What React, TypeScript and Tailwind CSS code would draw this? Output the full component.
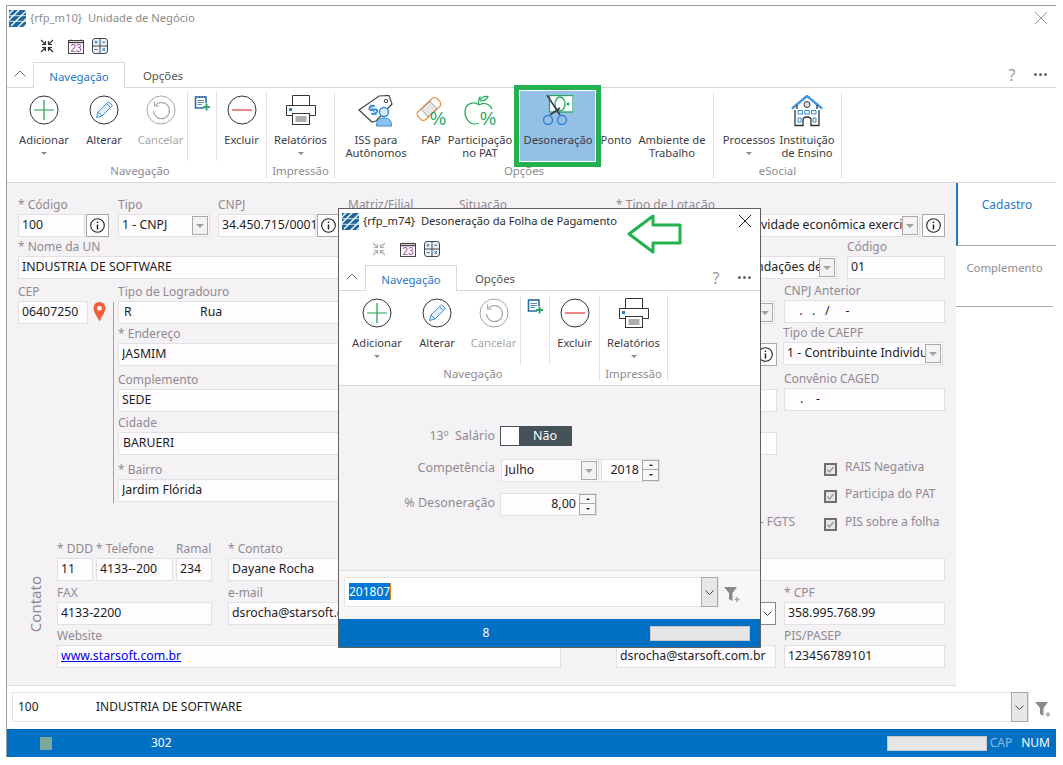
import type { ReactNode } from 'react'

const font = 'font-["Noto_Sans",sans-serif]'

function Logo() {
  return (
    <svg width="17" height="17" viewBox="0 0 17 17" className="shrink-0">
      <rect width="17" height="17" fill="#1b679e" />
      <path d="M-2 6 6 -2M-2 12 12 -2M2 16 18 0M8 18 18 8M14 18 20 12" stroke="#fff" strokeWidth="1.4" />
      <path d="M0 5.7H17M0 11.3H17" stroke="#fff" strokeWidth="0.8" />
    </svg>
  )
}

function CollapseIcon({ color }: { color: string }) {
  return (
    <svg width="14" height="14" viewBox="0 0 14 14" fill="none" stroke={color} strokeWidth="1.2">
      <path d="M1 1 5.5 5.5M2 5.5H5.5V2M13 1 8.5 5.5M12 5.5H8.5V2M1 13 5.5 8.5M2 8.5H5.5V12M13 13 8.5 8.5M12 8.5H8.5V12" />
    </svg>
  )
}

function CalendarIcon() {
  return (
    <svg width="16" height="15" viewBox="0 0 16 15" fill="none">
      <rect x="0.5" y="1.5" width="15" height="13" fill="#fff" stroke="#444" />
      <path d="M.5 3.500H15.500" stroke="#444" strokeWidth="1.5" />
      <path d="M3 .5V2M13 .5V2" stroke="#444" />
      <text x="8" y="13" textAnchor="middle" fontSize="10" fontFamily="Liberation Sans, sans-serif" fill="#a24aa8">
        23
      </text>
    </svg>
  )
}

function CalcIcon() {
  return (
    <svg width="16" height="16" viewBox="0 0 16 16" fill="none">
      <rect x="0.5" y="0.5" width="15" height="15" rx="2.5" fill="#eef2f5" stroke="#445" />
      <path d="M8 .5V15.500M.5 8H15.500" stroke="#445" />
      <path d="M2.500 4.200H5.500M4 2.700V5.700M10 4.200H13.500M2.500 11.500H5.500M10.500 10 13 13M13 10 10.500 13" stroke="#2b7cc4" />
    </svg>
  )
}

function AddIcon() {
  return (
    <svg width="30" height="30" viewBox="0 0 30 30" fill="none">
      <circle cx="15" cy="15" r="14" stroke="#333" />
      <path d="M15 5V25M5 15H25" stroke="#1aa14c" strokeWidth="1.2" />
    </svg>
  )
}

function EditIcon() {
  return (
    <svg width="30" height="30" viewBox="0 0 30 30" fill="none">
      <circle cx="15" cy="15" r="14" stroke="#333" />
      <path d="M7.500 22.500 9 17 19.500 6.700 23.500 10.500 13 21Z M9 17 13 21M17.500 8.700 21.500 12.500" stroke="#3b8ed6" fill="#e4f0fa" />
    </svg>
  )
}

function UndoIcon() {
  return (
    <svg width="30" height="30" viewBox="0 0 30 30" fill="none" stroke="#a6a6a6">
      <circle cx="15" cy="15" r="14" />
      <path d="M9.300 10.500A8 8 0 1 1 7.500 16" strokeWidth="1.1" />
      <path d="M8.500 6.500V11H13" strokeWidth="1.1" />
    </svg>
  )
}

function NoteAddIcon() {
  return (
    <svg width="17" height="17" viewBox="0 0 17 17" fill="none">
      <path d="M10 13H1.500V2H12V8" stroke="#2d6ea8" strokeWidth="1.600" />
      <path d="M3 1V3M5.500 1V3M8 1V3M10.500 1V3" stroke="#2d6ea8" />
      <path d="M3.500 5.500H10M3.500 7.500H10M3.500 9.500H8" stroke="#2d6ea8" strokeWidth=".8" />
      <path d="M12.500 8.500V15.500M9 12H16" stroke="#2fa866" strokeWidth="2" />
    </svg>
  )
}

function MinusIcon() {
  return (
    <svg width="30" height="30" viewBox="0 0 30 30" fill="none">
      <circle cx="15" cy="15" r="14" stroke="#333" />
      <path d="M5 15H25" stroke="#e0353b" strokeWidth="1.2" />
    </svg>
  )
}

function PrinterIcon() {
  return (
    <svg width="30" height="30" viewBox="0 0 30 30" fill="none" stroke="#333">
      <path d="M6.500 10V.5H23.500V10" />
      <path d="M6 20.500H.5V10.500H29.500V20.500H24" fill="#fff" />
      <rect x="6.500" y="18.500" width="17" height="11" fill="#fff" />
      <path d="M9.500 22H20.500M9.500 24H20.500M9.500 26H20.500" strokeWidth=".8" />
      <rect x="3" y="13" width="3" height="3" fill="#2b7cc4" stroke="none" />
    </svg>
  )
}

function TagIcon() {
  return (
    <svg width="36" height="32" viewBox="0 0 36 32" fill="none">
      <path d="M1 15 21 1 31 .5 34 9 18 26 14 27Z" fill="#fff" stroke="#444" strokeWidth="1.2" />
      <circle cx="28" cy="6" r="1.700" stroke="#444" />
      <text x="15" y="20" textAnchor="middle" fontSize="15" fontWeight="700" fontFamily="Liberation Sans, sans-serif" fill="#2f8bd8" transform="rotate(-30 15 15)">
        $
      </text>
      <circle cx="26" cy="17" r="4.500" fill="#dbeafa" stroke="#2f8bd8" strokeWidth="1.400" />
      <path d="M18.500 31C18.500 25 21 23 26 23S33.500 25 33.500 31Z" fill="#8cc0ee" stroke="#2f8bd8" />
    </svg>
  )
}

function BandageIcon() {
  return (
    <svg width="33" height="32" viewBox="0 0 33 32" fill="none">
      <rect x="-13" y="-5.500" width="26" height="11" rx="3.500" transform="translate(14 14) rotate(-43)" fill="#fff" stroke="#ef8d3e" strokeWidth="1.300" />
      <rect x="-6" y="-5" width="12" height="10" transform="translate(14 14) rotate(-43)" fill="#e6e6e6" stroke="#888" strokeWidth=".8" />
      <text x="23" y="30" textAnchor="middle" fontSize="18" fontFamily="Liberation Sans, sans-serif" fill="#22a860">
        %
      </text>
    </svg>
  )
}

function AppleIcon() {
  return (
    <svg width="33" height="32" viewBox="0 0 33 32" fill="none" stroke="#28ab5c" strokeWidth="1.200">
      <path d="M15 10C10 6 1 8 1 17C1 24 6 29 10 29C12 29 13 28.500 15 28.500" />
      <path d="M15 10C17 8.500 21 8 24 9.500C26 11 27.500 12.500 28 14" />
      <path d="M14.500 9C14.500 6 15 3 16.500 1.500M16 5C18 2 21 1 24 1.500C23 4 20 6 16 6" />
      <text x="24" y="30" textAnchor="middle" fontSize="18" fontFamily="Liberation Sans, sans-serif" fill="#22a860" stroke="none">
        %
      </text>
    </svg>
  )
}

function ScissorsIcon() {
  return (
    <svg width="30" height="30" viewBox="0 0 30 30" fill="none">
      <rect x="6.500" y=".5" width="23.500" height="16.500" fill="#fff" stroke="#22a860" strokeWidth="1.300" />
      <ellipse cx="17" cy="9" rx="5" ry="7" stroke="#22a860" strokeWidth="1.300" />
      <circle cx="25" cy="9" r="1.500" fill="#22a860" />
      <path d="M4 0 17 20M17 13 7 20" stroke="#3a3a4a" strokeWidth="1.600" />
      <circle cx="5" cy="25" r="4.500" stroke="#2f7fd0" strokeWidth="1.400" />
      <circle cx="19" cy="25" r="4.500" stroke="#2f7fd0" strokeWidth="1.400" />
    </svg>
  )
}

function HouseIcon() {
  return (
    <svg width="32" height="32" viewBox="0 0 32 32" fill="none">
      <path d="M1 13.500 16 1 31 13.500" stroke="#3f97e2" strokeWidth="2.400" />
      <path d="M4 15V30.500H12V25C12 23 13.500 22 16 22S20 23 20 25V30.500H28V15M6 10V14M26 10V14" stroke="#333" strokeWidth="1.300" />
      <circle cx="16" cy="9.500" r="3" stroke="#333" fill="#ddd" />
      <path d="M7 15.500H11.500V19H7ZM13.800 15.500H18.200V19H13.800ZM20.500 15.500H25V19H20.500ZM7 23H10V27H7ZM22 23H25V27H22Z" stroke="#2f8bd8" />
    </svg>
  )
}

function Caret() {
  return <span className="mt-[6px] block h-0 w-0 border-x-[3.5px] border-t-[3.5px] border-x-transparent border-t-[#8a8a8a]" />
}

function RibbonButton({
  w,
  icon,
  label,
  caret,
  disabled,
  divider,
}: {
  w: number
  icon: ReactNode
  label: ReactNode
  caret?: boolean
  disabled?: boolean
  divider?: boolean
}) {
  return (
    <div
      style={{ width: w }}
      className={`flex h-[69px] shrink-0 flex-col items-center pt-[3px] ${divider ? 'border-r border-[#e2e0e2]' : ''}`}
    >
      <div className="flex h-[38px] items-start justify-center">{icon}</div>
      <div className={`whitespace-nowrap text-center text-[11.2px] leading-[13px] ${disabled ? 'text-[#a8a8a8]' : 'text-[#3c3c46]'}`}>{label}</div>
      {caret && <Caret />}
    </div>
  )
}

function RibbonGroup({ label, children }: { label: string; children: ReactNode }) {
  return (
    <div className="mt-[4px] flex h-[86px] shrink-0 flex-col border-r border-[#e2e0e2]">
      <div className="flex">{children}</div>
      <div className="mt-auto h-[14px] text-center text-[11.4px] leading-[13px] text-[#8f8a92]">{label}</div>
    </div>
  )
}

function NavGroups() {
  return (
    <>
      <RibbonGroup label="Navegação">
        <RibbonButton w={60} icon={<AddIcon />} label="Adicionar" caret />
        <RibbonButton w={60} icon={<EditIcon />} label="Alterar" />
        <RibbonButton w={54} icon={<UndoIcon />} label="Cancelar" disabled divider />
        <RibbonButton w={29} icon={<NoteAddIcon />} label="" divider />
        <RibbonButton w={49} icon={<MinusIcon />} label="Excluir" />
      </RibbonGroup>
      <RibbonGroup label="Impressão">
        <RibbonButton w={67} icon={<PrinterIcon />} label="Relatórios" caret />
      </RibbonGroup>
    </>
  )
}

function WindowHeader({
  title,
  active,
  children,
  left,
}: {
  title: ReactNode
  active?: boolean
  children: ReactNode
  left: string
}) {
  return (
    <>
      <div className={`flex h-[26px] items-center pb-[2px] ${left}`}>
        <Logo />
        <span className={`ml-[4px] flex-1 whitespace-nowrap text-[11.2px] ${active ? 'text-[#2c2c2c]' : 'text-[#8c8c8c]'}`}>{title}</span>
        <svg width="14" height="14" viewBox="0 0 14 14" className="mr-[8px]" stroke={active ? '#222' : '#999'} fill="none">
          <path d="M1 1 13 13M13 1 1 13" />
        </svg>
      </div>
      <div className="flex h-[30px] items-center pb-[2px] pl-[33px]">
        <CollapseIcon color={active ? '#aab0b4' : '#333'} />
        <span className="ml-[14px]">
          <CalendarIcon />
        </span>
        <span className="ml-[8px]">
          <CalcIcon />
        </span>
      </div>
      <div className="flex h-[26px] border-b border-[#d8d8d8] text-[11.4px]">
        <div className="flex w-[26px] items-center justify-center pb-[2px]">
          <svg width="12" height="7" viewBox="0 0 12 7" fill="none" stroke="#777">
            <path d="M.5 6.500 6 1 11.500 6.500" />
          </svg>
        </div>
        <div className="z-10 flex h-[26px] w-[92px] items-center justify-center border-x border-t border-[#d8d8d8] bg-white pt-[2px] text-[#1a7ad0]">Navegação</div>
        <div className="flex w-[76px] items-center justify-center pt-[2px] text-[#555]">Opções</div>
        <div className="flex-1" />
        <div className="flex w-[40px] items-center justify-center text-[16px] text-[#9a9a9a]">?</div>
        <div className="flex w-[24px] items-center justify-start gap-[2px] pl-[2px]">
          <span className="h-[3px] w-[3px] rounded-full bg-[#666]" />
          <span className="h-[3px] w-[3px] rounded-full bg-[#666]" />
          <span className="h-[3px] w-[3px] rounded-full bg-[#666]" />
        </div>
      </div>
      {children}
    </>
  )
}

function InfoButton({ className = '' }: { className?: string }) {
  return (
    <div className={`flex h-[23px] w-[23px] shrink-0 items-center justify-center border border-[#a9a9a9] bg-white ${className}`}>
      <svg width="15" height="15" viewBox="0 0 15 15" fill="none" stroke="#222">
        <circle cx="7.500" cy="7.500" r="6.800" strokeWidth="1.100" />
        <path d="M7.500 6.500V11.500" strokeWidth="1.500" />
        <path d="M7.500 3.500V5" strokeWidth="1.500" />
      </svg>
    </div>
  )
}

function DropArrow() {
  return (
    <div className="mr-[1px] flex h-[19px] w-[16px] shrink-0 items-center justify-center border border-[#a9a9a9] bg-[#f4f2f4]">
      <span className="h-0 w-0 border-x-[4px] border-t-[4px] border-x-transparent border-t-[#a0a0a0]" />
    </div>
  )
}

function Box({ text, select, className = '', w, textClass = '' }: { text?: ReactNode; select?: boolean; className?: string; w?: number; textClass?: string }) {
  return (
    <div
      style={w ? { width: w } : undefined}
      className={`flex h-[23px] min-w-0 shrink-0 items-center overflow-hidden border border-[#e2e0e3] bg-[#fffcff] pl-[3px] text-[12.3px] text-[#1c1c1c] ${className}`}
    >
      <span className={`min-w-0 flex-1 overflow-hidden whitespace-nowrap ${textClass}`}>{text}</span>
      {select && <DropArrow />}
    </div>
  )
}

function Field({
  label,
  w,
  children,
  className = '',
}: {
  label: string
  w: number
  children: ReactNode
  className?: string
}) {
  return (
    <div style={{ width: w }} className={`shrink-0 ${className}`}>
      <div className="h-[18px] whitespace-nowrap leading-[18px] text-[#8f8a92]">{label}</div>
      <div className="flex">{children}</div>
    </div>
  )
}

function CheckRow({ label, className = '' }: { label: string; className?: string }) {
  return (
    <div className={`flex h-[18px] items-start pl-[40px] ${className}`}>
      <svg width="13" height="13" viewBox="0 0 13 13" className="mt-[5px] shrink-0" fill="none">
        <rect x="1" y="1" width="11" height="11" fill="#e6e6e6" stroke="#6e6e6e" strokeWidth="2" />
        <path d="M3.500 6.500 5.500 9 9.500 4" stroke="#9a9a9a" strokeWidth="1.300" />
      </svg>
      <span className="ml-[8px] whitespace-nowrap leading-[18px] text-[#8f8a92]">{label}</span>
    </div>
  )
}

function Funnel() {
  return (
    <svg width="17" height="17" viewBox="0 0 17 17">
      <path d="M0 1H13L8.500 7V15L5 13V7Z" fill="#8a8a8a" />
      <path d="M13 11V16M10.500 13.500H15.500" stroke="#a8a8a8" strokeWidth="1.500" />
    </svg>
  )
}

function ChevronBox() {
  return (
    <div className="flex h-[30px] w-[17px] shrink-0 items-center justify-center border border-[#a9a9a9] bg-[#e9e6ea]">
      <svg width="9" height="5" viewBox="0 0 9 5" fill="none" stroke="#444">
        <path d="M.5 .5 4.500 4.500 8.500 .5" />
      </svg>
    </div>
  )
}

function Spinner() {
  return (
    <div className="flex h-[21px] w-[17px] shrink-0 flex-col">
      <div className="flex h-[10px] items-center justify-center border border-[#a9a9a9] bg-[#f8f8f8]">
        <span className="h-0 w-0 border-x-[2px] border-b-[2px] border-x-transparent border-b-[#222]" />
      </div>
      <div className="flex h-[11px] items-center justify-center border border-t-0 border-[#a9a9a9] bg-[#f8f8f8]">
        <span className="h-0 w-0 border-x-[2px] border-t-[2px] border-x-transparent border-t-[#222]" />
      </div>
    </div>
  )
}

function MainForm() {
  return (
    <div className="h-[503px] w-[949px] shrink-0 border-b border-[#dedcde] bg-[#f5f2f5] pl-[11px] pt-[13px]">
      <div className="flex">
        <Field label="* Código" w={91}>
          <Box text="100" w={67} />
          <InfoButton className="ml-[1px]" />
        </Field>
        <Field label="Tipo" w={92} className="ml-[9px]">
          <Box text="1 - CNPJ" select w={92} />
        </Field>
        <Field label="CNPJ" w={122} className="ml-[8px]">
          <Box text="34.450.715/0001" w={98} />
          <InfoButton className="ml-[1px]" />
        </Field>
        <Field label="Matriz/Filial" w={103} className="ml-[8px]">
          <Box text="Matriz" select w={103} />
        </Field>
        <Field label="Situação" w={149} className="ml-[8px]">
          <Box text="Ativa" select w={149} />
        </Field>
        <Field label="* Tipo de Lotação" w={329} className="ml-[8px]">
          <Box text="01 - Classificação da atividade econômica exercida" textClass="pl-[8px]" select w={304} />
          <InfoButton className="ml-[2px]" />
        </Field>
      </div>
      <div className="mt-[1px] flex">
        <Field label="* Nome da UN" w={590}>
          <Box text="INDUSTRIA DE SOFTWARE" w={590} />
        </Field>
        <Field label="Natureza" w={221} className="ml-[8px]">
          <Box text="Tipo de Entidades e Fundações de direito" textClass="pl-[6px]" select w={221} />
        </Field>
        <Field label="Código" w={98} className="ml-[10px]">
          <Box text="01" w={98} />
        </Field>
      </div>
      <div className="mt-[3px] flex">
        <div className="flex w-[95px] shrink-0 pt-[1px]">
          <Field label="CEP" w={70}>
            <Box text="06407250" w={70} />
          </Field>
          <svg width="13" height="20" viewBox="0 0 13 20" className="ml-[5px] mt-[19px]">
            <path d="M6.500 0C2.800 0 .5 2.800 .5 6.200 .5 10 4.500 15 6.500 19.500 8.500 15 12.500 10 12.500 6.200 12.500 2.800 10.200 0 6.500 0Z" fill="#f2603c" />
            <circle cx="6.500" cy="6.300" r="2.400" fill="#fff" />
          </svg>
        </div>
        <div className="mt-[20px] h-[201px] w-px shrink-0 bg-[#a4a2a6]" />
        <div className="ml-[4px] w-[659px] shrink-0 pt-[1px]">
          <div className="flex">
            <Field label="Tipo de Logradouro" w={490}>
              <Box
                w={490}
                text={
                  <span className="flex">
                    <span className="w-[78px] pl-[2px]">R</span>
                    <span>Rua</span>
                  </span>
                }
              />
            </Field>
            <Field label="Nacionalidade" w={159} className="ml-[8px]">
              <Box text="Brasileira" select w={159} />
            </Field>
          </div>
          <div className="mt-[1px] flex">
            <Field label="* Endereço" w={490}>
              <Box text="JASMIM" w={490} />
            </Field>
            <Field label="CAEPF" w={161} className="ml-[8px]">
              <Box w={144} />
              <InfoButton className="-ml-[6px] w-[23px]" />
            </Field>
          </div>
          <div className="mt-[5px] flex">
            <Field label="Complemento" w={490}>
              <Box text="SEDE" w={490} />
            </Field>
            <Field label="CNAE" w={161} className="ml-[8px]">
              <Box w={161} />
            </Field>
          </div>
          <div className="mt-[2px] flex">
            <Field label="Cidade" w={490}>
              <Box text="BARUERI" w={490} className="pl-[4px]" />
            </Field>
            <Field label="Município" w={161} className="ml-[8px]">
              <Box w={161} />
            </Field>
          </div>
          <div className="mt-[6px] flex">
            <Field label="* Bairro" w={490}>
              <Box text="Jardim Flórida" w={490} />
            </Field>
          </div>
          <div className="mt-[11px] h-[18px] w-[677px] whitespace-nowrap text-right leading-[18px] text-[#8f8a92]">Optante - FGTS</div>
        </div>
        <div className="ml-[7px] w-[161px] shrink-0">
          <Field label="CNPJ Anterior" w={161}>
            <Box text={<span className="pl-[8px]">&nbsp;.&nbsp;&nbsp;&nbsp;.&nbsp;&nbsp;&nbsp;/&nbsp;&nbsp;&nbsp;&nbsp;&nbsp;-</span>} w={161} />
          </Field>
          <Field label="Tipo de CAEPF" w={160} className="-ml-[1px] mt-[1px]">
            <Box text="1 - Contribuinte Individual" select w={160} />
          </Field>
          <Field label="Convênio CAGED" w={161} className="mt-[5px]">
            <Box text={<span className="pl-[12px]">.&nbsp;&nbsp;&nbsp;&nbsp;-</span>} w={161} />
          </Field>
          <CheckRow label="RAIS Negativa" className="mt-[47px]" />
          <CheckRow label="Participa do PAT" className="mt-[9px]" />
          <CheckRow label="PIS sobre a folha" className="mt-[10px]" />
        </div>
      </div>
      <div className="mt-[9px] flex">
        <div className="flex w-[39px] shrink-0 items-center justify-center pr-[5px]">
          <span className="rotate-180 text-[15px] text-[#8f8a92] [writing-mode:vertical-rl]">Contato</span>
        </div>
        <div>
          <div className="flex">
            <Field label="* DDD" w={36}>
              <Box text="11" w={36} />
            </Field>
            <Field label="* Telefone" w={77} className="ml-[3px]">
              <Box text="4133--200" w={77} />
            </Field>
            <Field label="Ramal" w={36} className="ml-[3px]">
              <Box text="234" w={36} />
            </Field>
            <Field label="* Contato" w={717} className="ml-[16px]">
              <Box text="Dayane Rocha" w={717} />
            </Field>
          </div>
          <div className="mt-[3px] flex">
            <Field label="FAX" w={155}>
              <Box text="4133-2200" w={155} />
            </Field>
            <Field label="e-mail" w={380} className="ml-[16px]">
              <Box text="dsrocha@starsoft.com.br" w={380} />
            </Field>
            <Field label="Tipo" w={160} className="ml-[8px]">
              <Box w={160} text="" />
              <div className="-ml-[17px] flex h-[23px] w-[17px] shrink-0 items-center justify-center border border-[#8a8a8a] bg-white">
                <svg width="9" height="5" viewBox="0 0 9 5" fill="none" stroke="#444">
                  <path d="M.5 .5 4.500 4.500 8.500 .5" />
                </svg>
              </div>
            </Field>
            <Field label="* CPF" w={161} className="ml-[8px]">
              <Box text="358.995.768.99" w={161} />
            </Field>
          </div>
          <div className="mt-[2px] flex">
            <Field label="Website" w={504}>
              <Box text={<span className="text-[#0000ee] underline">www.starsoft.com.br</span>} w={504} />
            </Field>
            <Field label="e-mail" w={160} className="ml-[55px]">
              <Box text="dsrocha@starsoft.com.br" w={160} />
            </Field>
            <Field label="PIS/PASEP" w={161} className="ml-[8px]">
              <Box text="123456789101" w={161} />
            </Field>
          </div>
        </div>
      </div>
    </div>
  )
}

function SideTabs() {
  return (
    <div className="flex-1">
      <div className="h-[63px] border-b border-l-2 border-b-[#a8a8a8] border-l-[#1a7ad0] pt-[13px] text-center text-[#1a7ad0]">Cadastro</div>
      <div className="mr-[3px] h-[61px] border-b border-[#a8a8a8] pt-[13px] text-center text-[11.4px] text-[#8f8a92]">Complemento</div>
    </div>
  )
}

function Dialog() {
  return (
    <div className="absolute left-[338px] top-[208px] z-20 flex h-[440px] w-[423px] flex-col border border-[#5f5f5f] bg-white">
      <WindowHeader
        active
        left="pl-[3px]"
        title={
          <>
            {'{rfp_m74}'}&nbsp; Desoneração da Folha de Pagamento
          </>
        }
      >
        <div className="flex h-[95px] shrink-0 border-b border-[#d8d8d8] pl-[8px]">
          <NavGroups />
        </div>
      </WindowHeader>
      <div className="flex-1 bg-[#f5f2f5] pt-[40px]">
        <div className="flex h-[20px] items-center">
          <span className="w-[156px] whitespace-pre text-right text-[12.5px] text-[#8f8a92]">13º  Salário</span>
          <div className="ml-[5px] flex h-[20px] w-[72px] border border-[#45525a] bg-[#45525a]">
            <span className="w-[18px] bg-white" />
            <span className="flex-1 text-center text-[12.5px] leading-[18px] text-white">Não</span>
          </div>
        </div>
        <div className="mt-[13px] flex h-[23px]">
          <span className="w-[156px] text-right text-[12.5px] leading-[17px] text-[#8f8a92]">Competência</span>
          <Box text="Julho" select w={98} className="ml-[6px]" />
          <div className="ml-[2px] flex h-[23px] w-[59px] items-center border border-[#e2e0e3] bg-[#fffcff] text-[12.5px] text-[#1c1c1c]">
            <span className="flex-1 pr-[3px] text-right">2018</span>
            <Spinner />
          </div>
        </div>
        <div className="mt-[11px] flex h-[23px]">
          <span className="w-[156px] text-right text-[12.5px] leading-[19px] text-[#8f8a92]">% Desoneração</span>
          <div className="ml-[5px] flex h-[23px] w-[97px] items-center border border-[#e2e0e3] bg-[#fffcff] text-[12.5px] text-[#1c1c1c]">
            <span className="flex-1 pr-[3px] text-right">8,00</span>
            <Spinner />
          </div>
        </div>
      </div>
      <div className="flex h-[49px] shrink-0 items-start border-t border-[#e0e0e0] bg-[#f7f7f7] pl-[5px] pt-[6px]">
        <div className="flex h-[30px] w-[375px] items-center border border-[#e4e4e4] bg-white pl-[4px]">
          <span className="flex-1">
            <span className="border-r border-[#e8821e] bg-[#0078d7] text-white">201807</span>
          </span>
          <ChevronBox />
        </div>
        <div className="ml-[5px] mt-[9px]">
          <Funnel />
        </div>
      </div>
      <div className="flex h-[28px] shrink-0 items-center bg-[#0070c5] text-white">
        <span className="w-[294px] text-center">8</span>
        <span className="ml-[17px] h-[15px] w-[100px] border border-[#c8c8c8] bg-[#e6e6e6]" />
      </div>
    </div>
  )
}

export default function App() {
  return (
    <div className={`relative h-[765px] w-[1063px] overflow-hidden bg-white text-[12px] ${font}`}>
      <div className="ml-[6px] mt-[5px] flex h-[752px] w-[1050px] flex-col border-l border-t border-[#9c9c9c]">
        <WindowHeader
          left="pl-[2px]"
          title={
            <>
              {'{rfp_m10}'}&nbsp; Unidade de Negócio
            </>
          }
        >
          <div className="relative flex h-[95px] shrink-0 border-b border-[#d8d8d8] pl-[7px]">
            <NavGroups />
            <RibbonGroup label="Opções">
              <RibbonButton w={82} icon={<TagIcon />} label={<>ISS para<br />Autônomos</>} />
              <RibbonButton w={28} icon={<BandageIcon />} label="FAP" />
              <RibbonButton w={70} icon={<AppleIcon />} label={<>Participação<br />no PAT</>} />
              <div className="relative w-[86px] shrink-0">
                <div className="absolute -top-[7px] left-[-1px] h-[82px] w-[87px] border-[5px] border-[#22b14c] bg-[#94c0e6] outline outline-1 -outline-offset-6 outline-white" />
                <div className="relative">
                  <RibbonButton w={86} icon={<ScissorsIcon />} label="Desoneração" />
                </div>
              </div>
              <RibbonButton w={30} icon={null} label="Ponto" />
              <RibbonButton w={82} icon={null} label={<>Ambiente de<br />Trabalho</>} />
            </RibbonGroup>
            <RibbonGroup label="eSocial">
              <RibbonButton w={70} icon={null} label="Processos" caret />
              <RibbonButton w={46} icon={<HouseIcon />} label={<>Instituição<br />de Ensino</>} />
              <div className="w-[11px] shrink-0" />
            </RibbonGroup>
          </div>
        </WindowHeader>
        <div className="flex h-[503px] shrink-0">
          <MainForm />
          <SideTabs />
        </div>
        <div className="flex h-[43px] shrink-0 items-start pl-[5px] pt-[6px]">
          <div className="flex h-[30px] w-[1017px] items-center border border-[#e4e4e4] bg-white">
            <span className="w-[83px] pl-[5px] text-[#1c1c1c]">100</span>
            <span className="flex-1 text-[#1c1c1c]">INDUSTRIA DE SOFTWARE</span>
            <ChevronBox />
          </div>
          <div className="ml-[6px] mt-[9px]">
            <Funnel />
          </div>
        </div>
        <div className="flex h-[28px] shrink-0 items-center bg-[#0070c5] text-white">
          <span className="ml-[33px] h-[13px] w-[12px] bg-[#7aa89a]" />
          <span className="ml-[99px]">302</span>
          <span className="ml-auto h-[15px] w-[100px] border border-[#c8c8c8] bg-[#e6e6e6]" />
          <span className="ml-[3px] text-[#8fb8e0]">CAP</span>
          <span className="ml-[9px] mr-[6px]">NUM</span>
        </div>
      </div>
      <Dialog />
      <svg width="56" height="40" viewBox="0 0 56 40" className="absolute left-[627px] top-[214px] z-30" fill="none">
        <path d="M2 20 26 2V11H53V29H26V38Z" fill="#fff" stroke="#22b14c" strokeWidth="3" strokeLinejoin="round" />
      </svg>
    </div>
  )
}
